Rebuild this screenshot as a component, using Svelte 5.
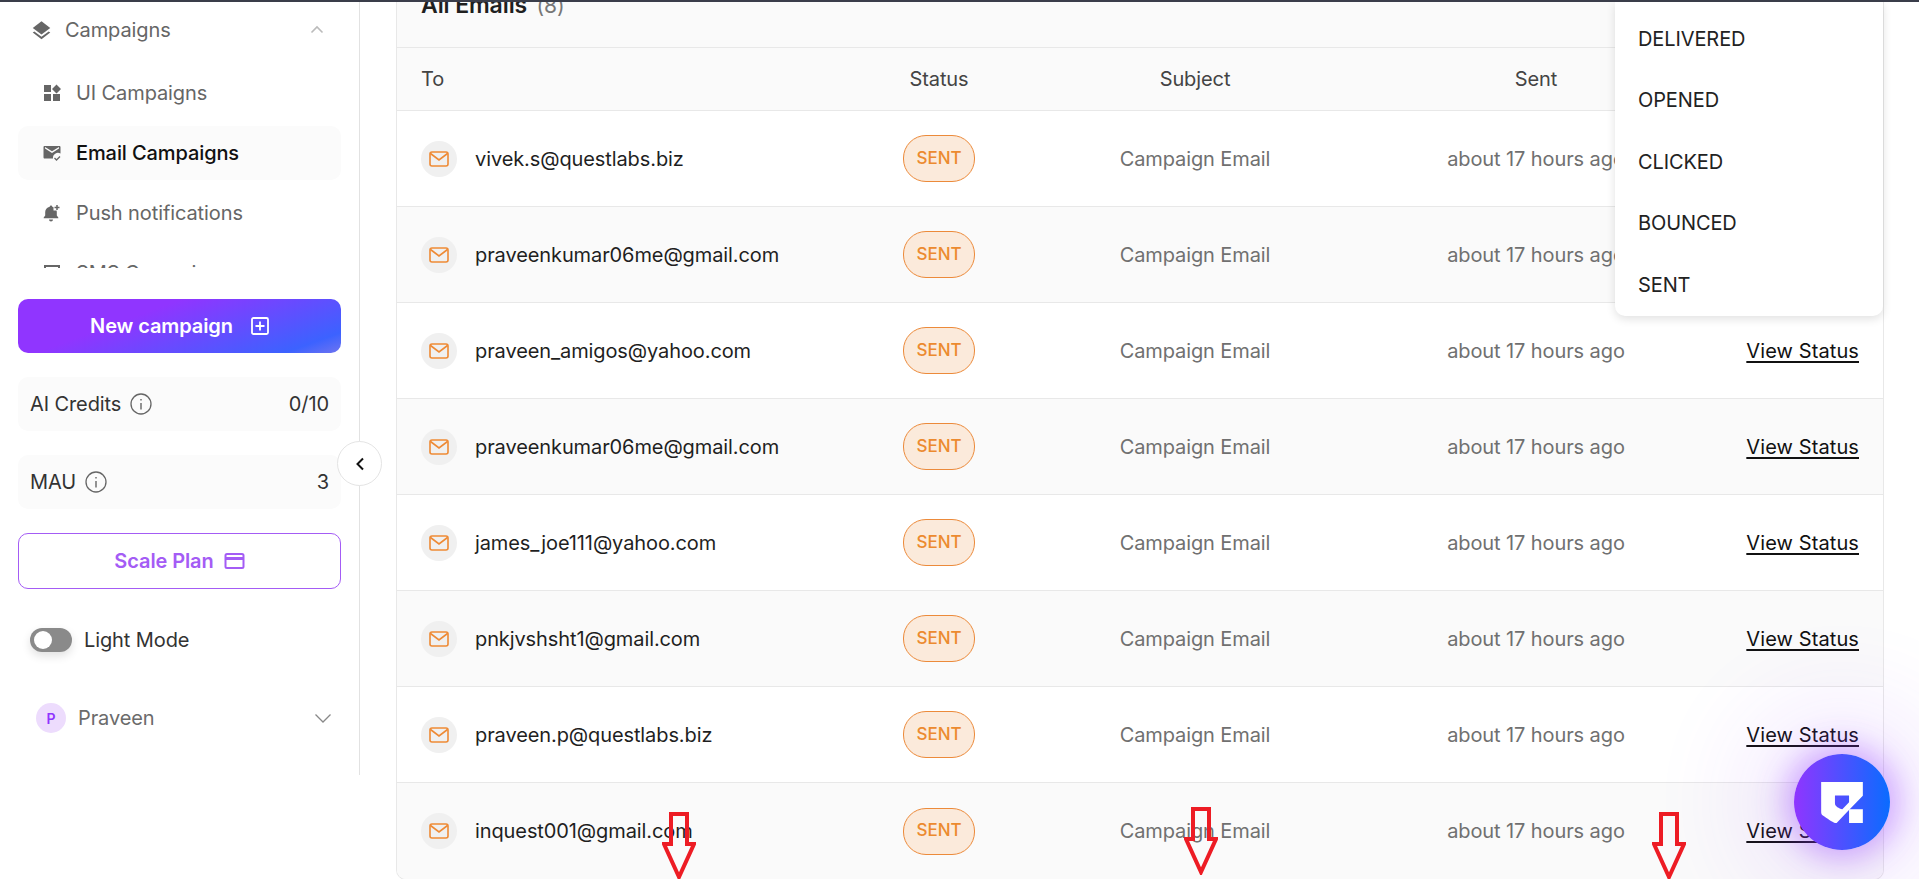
<script>
  const emails = [
    'vivek.s@questlabs.biz',
    'praveenkumar06me@gmail.com',
    'praveen_amigos@yahoo.com',
    'praveenkumar06me@gmail.com',
    'james_joe111@yahoo.com',
    'pnkjvshsht1@gmail.com',
    'praveen.p@questlabs.biz',
    'inquest001@gmail.com'
  ];
  const statuses = ['DELIVERED', 'OPENED', 'CLICKED', 'BOUNCED', 'SENT'];
  const arrows = [
    { x: 662, top: 812 },
    { x: 1184, top: 807 },
    { x: 1652, top: 812 }
  ];
</script>

<div class="page">
  <aside class="sidebar">
    <div class="nav">
      <div class="nav-head">
        <svg class="ico" width="21" height="21" viewBox="0 0 24 24" fill="#666"><path d="M12 1.500 2 9l10 7.500L22 9z"/><path d="M12 19 3.800 13 2 14.300l10 7.700 10-7.700L20.200 13z"/></svg>
        <span>Campaigns</span>
        <svg class="up" width="14" height="14" viewBox="0 0 14 14" fill="none" stroke="#bbb" stroke-width="1.600"><path d="M1.500 9.500 7 4l5.500 5.500"/></svg>
      </div>
      <div class="nav-item">
        <svg width="18" height="18" viewBox="0 0 18 18" fill="#666"><path d="M1 1h7v7H1zM1 10h7v7H1zM10 10h7v7h-7zM13.500.5 18 5l-4.500 4.500L9 5z"/></svg>
        <span>UI Campaigns</span>
      </div>
      <div class="nav-item active">
        <svg width="18" height="18" viewBox="0 0 18 18" fill="#666"><path d="M1.500 2h15c.5 0 1 .5 1 1v6.500a5 5 0 0 0-7.500 5H1.500c-.5 0-1-.5-1-1V3c0-.5.5-1 1-1zM2 4.500l7 4.500 7-4.500V3L9 7.300 2 3z" fill-rule="evenodd"/><path d="m11.500 14 2 2 3.500-3.500" fill="none" stroke="#666" stroke-width="1.300"/></svg>
        <span>Email Campaigns</span>
      </div>
      <div class="nav-item">
        <svg width="18" height="18" viewBox="0 0 18 18" fill="#666"><path d="M8 1.500a1.300 1.300 0 0 1 1.300 1.200c.4.100.8.300 1.200.5v3.300h3c.2.500.3 1 .3 1.500v3.500l1.500 2v.8H.7V13.500l1.500-2V8c0-2.600 1.700-4.700 4.500-5.300A1.300 1.300 0 0 1 8 1.500zM6 15.500h4a2 2 0 0 1-4 0z"/><path d="M14 1v5M11.500 3.500h5" fill="none" stroke="#666" stroke-width="1.500"/></svg>
        <span>Push notifications</span>
      </div>
      <div class="nav-item">
        <svg width="18" height="18" viewBox="0 0 18 18" fill="#666"><path d="M1 1h16v12H5l-4 4zM3 3v8h12V3z" fill-rule="evenodd"/></svg>
        <span>SMS Campaigns</span>
      </div>
    </div>

    <button class="new-btn">
      New campaign
      <svg width="18" height="18" viewBox="0 0 18 18" fill="none" stroke="#fff" stroke-width="1.800"><rect x="1" y="1" width="16" height="16" rx="1.500"/><path d="M9 4.500v9M4.500 9h9"/></svg>
    </button>

    <div class="stat">
      <span class="stat-label">AI Credits
        <svg width="22" height="22" viewBox="0 0 22 22" fill="none" stroke="#666" stroke-width="1.300"><circle cx="11" cy="11" r="10"/><path d="M11 10v6.500M11 6v1.600" stroke-width="1.400"/></svg>
      </span>
      <span>0/10</span>
    </div>
    <div class="stat">
      <span class="stat-label">MAU
        <svg width="22" height="22" viewBox="0 0 22 22" fill="none" stroke="#666" stroke-width="1.300"><circle cx="11" cy="11" r="10"/><path d="M11 10v6.500M11 6v1.600" stroke-width="1.400"/></svg>
      </span>
      <span>3</span>
    </div>

    <button class="scale-btn">
      Scale Plan
      <svg width="21" height="16" viewBox="0 0 20 16" fill="none" stroke="#a45cf5" stroke-width="2"><rect x="1" y="1" width="18" height="14" rx="1.500"/><path d="M1 5.500h18" stroke-width="3"/></svg>
    </button>

    <div class="mode">
      <span class="toggle"><span class="knob"></span></span>
      <span>Light Mode</span>
    </div>

    <div class="user">
      <span class="avatar">P</span>
      <span class="user-name">Praveen</span>
      <svg width="16" height="9" viewBox="0 0 16 9" fill="none" stroke="#888" stroke-width="1.300"><path d="m.5.5 7.500 7.500L15.500.5"/></svg>
    </div>

    <button class="collapse" aria-label="Collapse">
      <svg width="10" height="14" viewBox="0 0 10 14" fill="none" stroke="#111" stroke-width="2"><path d="M8 1.500 2.500 7 8 12.500"/></svg>
    </button>
  </aside>

  <main class="main">
    <section class="card">
      <div class="card-head"><b>All Emails</b> <span>(8)</span></div>
      <div class="row thead">
        <div>To</div>
        <div class="c">Status</div>
        <div class="c">Subject</div>
        <div class="c">Sent</div>
        <div></div>
      </div>
      {#each emails as email}
        <div class="row">
          <div class="to">
            <span class="mail-ico">
              <svg width="20" height="16" viewBox="0 0 20 16" fill="none" stroke="#ee8a35" stroke-width="1.600"><rect x="1" y="1" width="18" height="14" rx="2"/><path d="m1.500 2.500 8.500 6.500 8.500-6.500"/></svg>
            </span>
            {email}
          </div>
          <div class="c"><span class="pill">SENT</span></div>
          <div class="c muted">Campaign Email</div>
          <div class="c muted">about 17 hours ago</div>
          <div class="act"><span class="link">View Status</span></div>
        </div>
      {/each}
    </section>
  </main>

  <div class="menu">
    {#each statuses as s}
      <div class="menu-item">{s}</div>
    {/each}
  </div>

  <div class="widget">
    <svg width="42" height="41" viewBox="964 245 124 122" fill="#fff">
      <path fill-rule="evenodd" d="M964 245h124v41l-37 38-41 43h-5c-8-2-24-14-36-22-4-3-5-6-5-12zM1005 285h42v20l-20 21c-10-3-22-8-22-18z"/>
      <path d="M1047 326h41v41h-41z"/>
    </svg>
  </div>

  {#each arrows as a}
    <svg class="arrow" style="left: {a.x}px; top: {a.top}px" width="34" height="68" viewBox="0 0 34 68" fill="none" stroke="#ed1c24" stroke-width="4">
      <path d="M9 2h16v30h7L17 65 2 32h7z"/>
    </svg>
  {/each}
</div>

<style>
  :global(body) {
    margin: 0;
    background: #fff;
  }

  .page {
    position: relative;
    display: flex;
    align-items: flex-start;
    height: 877px;
    overflow: hidden;
    border-top: 2px solid #3a3d4a;
    font-family: Inter, "Liberation Sans", sans-serif;
    font-size: 20px;
    letter-spacing: -0.1px;
    color: #1f1f1f;
  }

  .sidebar {
    position: relative;
    box-sizing: border-box;
    flex: none;
    width: 360px;
    height: 773px;
    padding: 0 18px;
    border-right: 1px solid #e2e2e2;
    display: flex;
    flex-direction: column;
  }

  .nav {
    height: 266px;
    overflow: hidden;
    margin-bottom: 31px;
  }

  .nav-head {
    display: flex;
    align-items: center;
    height: 56px;
    padding-left: 13px;
    gap: 13px;
    color: #666;
  }

  .nav-head .up {
    margin-left: auto;
    margin-right: 17px;
  }

  .nav-item {
    display: flex;
    align-items: center;
    gap: 15px;
    height: 54px;
    margin-top: 6px;
    padding-left: 25px;
    color: #666;
    border-radius: 10px;
  }

  .nav-head + .nav-item {
    margin-top: 8px;
  }

  .nav-item.active {
    background: #fbfbfb;
    color: #111;
    font-weight: 500;
  }

  .new-btn {
    display: flex;
    align-items: center;
    justify-content: center;
    gap: 18px;
    height: 54px;
    flex: none;
    border: 0;
    border-radius: 10px;
    color: #fff;
    font: inherit;
    font-weight: 600;
    letter-spacing: inherit;
    background: linear-gradient(160deg, #9035ff 0%, #9035ff 35%, #3c62ff 88%, #6f74f0 100%);
  }

  .stat {
    display: flex;
    align-items: center;
    justify-content: space-between;
    height: 54px;
    flex: none;
    margin-top: 24px;
    padding: 0 12px;
    border-radius: 10px;
    background: #fbfbfb;
    color: #333;
  }

  .stat-label {
    display: flex;
    align-items: center;
    gap: 9px;
  }

  .scale-btn {
    display: flex;
    align-items: center;
    justify-content: center;
    gap: 10px;
    height: 56px;
    flex: none;
    margin-top: 24px;
    background: #fff;
    border: 1px solid #a45cf5;
    border-radius: 10px;
    color: #a45cf5;
    font: inherit;
    font-weight: 600;
    letter-spacing: inherit;
  }

  .mode {
    display: flex;
    align-items: center;
    gap: 12px;
    margin-top: 38px;
    padding-left: 12px;
    height: 26px;
    color: #333;
  }

  .toggle {
    display: flex;
    align-items: center;
    width: 42px;
    height: 24px;
    padding-left: 4px;
    box-sizing: border-box;
    border-radius: 12px;
    background: #8a8a8a;
    box-shadow: 0 4px 10px rgba(0, 0, 0, 0.12);
  }

  .knob {
    width: 18px;
    height: 18px;
    border-radius: 50%;
    background: #fff;
  }

  .user {
    display: flex;
    align-items: center;
    gap: 12px;
    margin-top: 50px;
    padding: 0 10px 0 18px;
    color: #6b6b6b;
  }

  .avatar {
    display: flex;
    align-items: center;
    justify-content: center;
    width: 30px;
    height: 30px;
    border-radius: 50%;
    background: #eddcfd;
    color: #9035ff;
    font-size: 14px;
    font-weight: 600;
  }

  .user-name {
    flex: 1;
  }

  .collapse {
    position: absolute;
    top: 439px;
    right: -23px;
    display: flex;
    align-items: center;
    justify-content: center;
    width: 45px;
    height: 45px;
    padding: 0;
    border: 1px solid #e4e4e4;
    border-radius: 50%;
    background: #fff;
  }

  .main {
    flex: 1;
    padding: 0 35px 0 36px;
  }

  .card {
    margin-top: -2px;
    border: 1px solid #e8e8e8;
    border-top: 0;
    border-radius: 0 0 10px 10px;
    overflow: hidden;
  }

  .card-head {
    box-sizing: border-box;
    height: 48px;
    padding-left: 24px;
    background: #fafafa;
    border-bottom: 1px solid #e8e8e8;
    font-size: 23px;
    line-height: 24px;
    overflow: hidden;
  }

  .card-head b {
    display: inline-block;
    margin-top: -8px;
    font-weight: 600;
    transform: translateY(-7px);
  }

  .card-head span {
    display: inline-block;
    margin-left: 3px;
    color: #777;
    font-size: 21px;
    transform: translateY(-7px);
  }

  .row {
    box-sizing: border-box;
    display: grid;
    grid-template-columns: 433px 170px 342px 340px 153px;
    align-items: center;
    height: 96px;
    padding: 0 24px;
    border-bottom: 1px solid #e8e8e8;
  }

  .row:nth-child(even) {
    background: #fafafa;
  }

  .row:last-child {
    border-bottom: 0;
  }

  .thead {
    height: 63px;
    color: #444;
  }

  .c {
    text-align: center;
  }

  .to {
    display: flex;
    align-items: center;
    gap: 18px;
  }

  .mail-ico {
    display: flex;
    align-items: center;
    justify-content: center;
    width: 36px;
    height: 36px;
    border-radius: 50%;
    background: #f0f0f0;
  }

  .pill {
    display: inline-flex;
    align-items: center;
    justify-content: center;
    box-sizing: border-box;
    width: 72px;
    height: 47px;
    padding-bottom: 2px;
    vertical-align: middle;
    border: 1px solid #ec8a3a;
    border-radius: 23px;
    background: #fbeadb;
    color: #ec8a2f;
    font-size: 17px;
    font-weight: 500;
  }

  .muted {
    color: #707070;
  }

  .act {
    text-align: right;
  }

  .link {
    color: #111;
    letter-spacing: 0.1px;
    text-decoration: underline;
    text-underline-offset: 3px;
  }

  .menu {
    position: absolute;
    top: 0;
    left: 1615px;
    box-sizing: border-box;
    width: 268px;
    height: 314px;
    padding: 6px 0;
    background: #fff;
    border-radius: 0 0 10px 10px;
    box-shadow: 0 3px 10px rgba(0, 0, 0, 0.12);
  }

  .menu-item {
    display: flex;
    align-items: center;
    height: 61.500px;
    padding-left: 23px;
    color: #222;
  }

  .widget {
    position: absolute;
    left: 1794px;
    top: 752px;
    display: flex;
    align-items: center;
    justify-content: center;
    width: 96px;
    height: 96px;
    border-radius: 50%;
    background: linear-gradient(90deg, #9035ff, #0a6cff);
    box-shadow: 0 0 30px 8px rgba(144, 53, 255, 0.38), 0 0 110px 40px rgba(144, 53, 255, 0.14);
  }

  .arrow {
    position: absolute;
    margin-top: -2px;
  }
</style>
